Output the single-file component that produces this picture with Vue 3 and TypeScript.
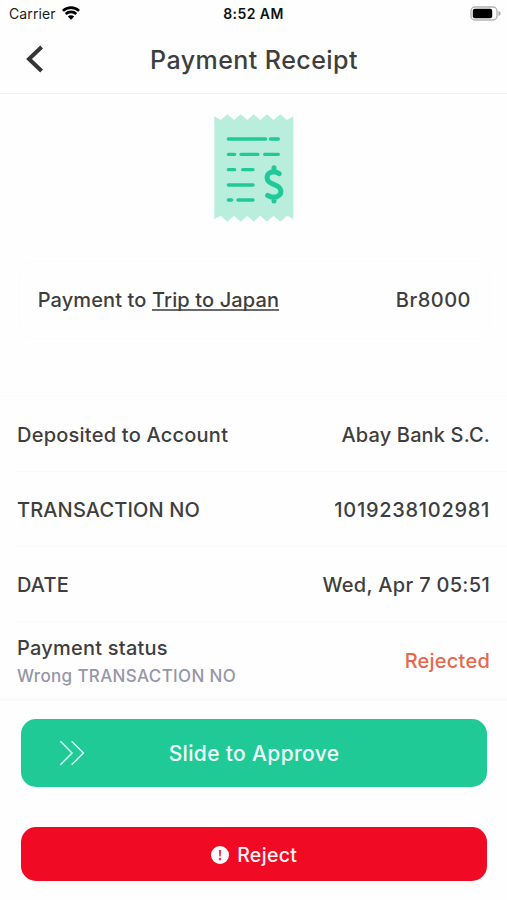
<script setup lang="ts">
interface DetailRow {
  id: string
  label: string
  value: string
}

const rows: DetailRow[] = [
  { id: 'account', label: 'Deposited to Account', value: 'Abay Bank S.C.' },
  { id: 'transaction', label: 'TRANSACTION NO', value: '1019238102981' },
  { id: 'date', label: 'DATE', value: 'Wed, Apr 7 05:51' },
]
</script>

<template>
  <main class="screen">
    <div class="status-bar">
      <div class="carrier">
        <span class="carrier-name">Carrier</span>
        <svg class="wifi" viewBox="0 0 18 14" aria-hidden="true">
          <path d="M.9 4.9a11.7 11.7 0 0 1 16.2 0" />
          <path d="M3.7 8a7.7 7.7 0 0 1 10.6 0" />
          <path class="wifi-dot" d="M9 13.8 5.8 10.5a4.5 4.5 0 0 1 6.4 0Z" />
        </svg>
      </div>
      <span class="clock">8:52 AM</span>
      <svg class="battery" viewBox="0 0 32 15" aria-hidden="true">
        <rect class="battery-case" x="1" y="1" width="26" height="13" rx="4" />
        <rect x="2.8" y="2.8" width="19.4" height="9.4" rx="2" />
        <path class="battery-tip" d="M28.4 5c3 .8 3 4.2 0 5Z" />
      </svg>
    </div>

    <header class="header">
      <button class="back" type="button" aria-label="Back">
        <svg viewBox="0 0 18 28" aria-hidden="true"><path d="M15.6 2 3 14l12.6 12" /></svg>
      </button>
      <h1 class="title">Payment Receipt</h1>
    </header>

    <svg class="receipt" viewBox="43 27 239 324" aria-hidden="true">
      <path
        class="paper"
        d="M44 34 63 45 83 28 103 45 123 28 143 45 162 28 182 45 202 28 222 45 242 28 262 45 281 34V342L262 332 242 350 222 332 202 350 182 332 162 350 143 332 123 350 103 332 83 350 63 332 44 342Z"
      />
      <path
        class="lines"
        d="M86 102H198M212 102H236M86 148H105M124 148H175M195 148H236M86 194H105M129 194H160M86 240H160M86 285H96M115 285H160"
      />
      <path
        class="dollar"
        d="M223 188V201M223 276V288M239 206C230 199 216 198 208 205C199 214 201 227 212 233L231 242C246 250 247 264 238 271C229 279 214 278 204 271"
      />
    </svg>

    <section class="summary">
      <span class="text payment-to">Payment to <a class="trip">Trip to Japan</a></span>
      <span class="text amount">Br8000</span>
    </section>

    <section class="details">
      <div v-for="row in rows" :key="row.id" class="row">
        <span class="text" :class="`label-${row.id}`">{{ row.label }}</span>
        <span class="text" :class="`value-${row.id}`">{{ row.value }}</span>
      </div>
      <div class="row row-status">
        <div class="status-copy">
          <span class="text status-label">Payment status</span>
          <span class="reason">Wrong TRANSACTION NO</span>
        </div>
        <span class="text rejected">Rejected</span>
      </div>
    </section>

    <button class="approve" type="button">
      <svg class="chevrons" viewBox="0 0 26 26" aria-hidden="true">
        <path d="M1.4 1.2 13 13 1.4 24.8M12.6 1.2 24.4 13 12.6 24.8" />
      </svg>
      <span class="approve-text">Slide to Approve</span>
    </button>

    <button class="reject" type="button">
      <svg class="alert" viewBox="0 0 18 18" aria-hidden="true">
        <circle cx="9" cy="9" r="9" />
        <path d="M7.9 4h2.2l-.4 6.4H8.3Z" />
        <circle class="alert-dot" cx="9" cy="13.1" r="1.3" />
      </svg>
      <span class="reject-text">Reject</span>
    </button>
  </main>
</template>

<style>
body {
  background: #fefefe;
}
</style>

<style scoped>
.screen {
  box-sizing: border-box;
  width: 507px;
  height: 900px;
  overflow: hidden;
  display: flex;
  flex-direction: column;
  background: #fefefe;
  color: #3e3e3f;
  font-family: Inter, "Liberation Sans", sans-serif;
}

button {
  border: 0;
  padding: 0;
  margin: 0;
  font-family: inherit;
}

svg {
  display: block;
  flex: none;
}

.status-bar {
  height: 28px;
  flex: none;
  display: grid;
  grid-template-columns: 1fr auto 1fr;
  align-items: center;
  padding: 0 5px 0 9px;
  color: #1c1c1c;
}

.carrier {
  display: flex;
  align-items: center;
  gap: 6px;
}

.carrier-name {
  font-size: 14px;
  letter-spacing: 0.1px;
  line-height: 28px;
}

.wifi {
  width: 18px;
  height: 14px;
  margin-top: -2px;
  fill: none;
  stroke: #000;
  stroke-width: 2.6;
}

.wifi .wifi-dot {
  fill: #000;
  stroke: none;
}

.clock {
  margin-right: 4px;
  font-size: 14px;
  font-weight: 600;
  letter-spacing: 0.45px;
  line-height: 28px;
  color: #111;
}

.battery {
  width: 32px;
  height: 15px;
  justify-self: end;
  margin-top: -2px;
}

.battery-case {
  fill: none;
  stroke: #b4b4b4;
  stroke-width: 1.4;
}

.battery .battery-tip {
  fill: #aaa;
}

.header {
  box-sizing: border-box;
  height: 66px;
  flex: none;
  display: grid;
  grid-template-columns: 60px 1fr 60px;
  align-items: center;
  border-bottom: 1px solid #efefef;
}

.back {
  width: 18px;
  height: 28px;
  margin-left: 26px;
  margin-top: -3px;
  background: none;
}

.back svg {
  width: 18px;
  height: 28px;
  fill: none;
  stroke: #343435;
  stroke-width: 4;
}

.title {
  margin: 0 0 2px 1px;
  text-align: center;
  font-size: 25px;
  font-weight: 450;
  line-height: 32px;
  letter-spacing: 0.45px;
  white-space: nowrap;
}

.receipt {
  width: 79.67px;
  height: 108px;
  margin: 20px 0 0 214.3px;
}

.paper {
  fill: #b9eedd;
}

.lines,
.dollar {
  fill: none;
  stroke: #20c997;
  stroke-width: 10;
  stroke-linecap: round;
}

.dollar {
  stroke-width: 15;
}

.text {
  font-size: 20px;
  font-weight: 450;
  line-height: 26px;
  letter-spacing: 0.14px;
  white-space: nowrap;
}

.payment-to {
  letter-spacing: 0.12px;
}

.amount {
  letter-spacing: 0.5px;
}

.label-account,
.status-label,
.rejected {
  letter-spacing: 0.23px;
}

.value-transaction {
  letter-spacing: 0.7px;
}

.value-date {
  letter-spacing: 0.3px;
}

.summary {
  box-sizing: border-box;
  height: 76px;
  flex: none;
  margin: 40px 18px 0 20px;
  padding: 0 18px 0 17.7px;
  display: flex;
  align-items: center;
  justify-content: space-between;
  border-radius: 14px;
  background: #fefefe;
  box-shadow: 0 0 4px rgba(0, 0, 0, 0.025);
}

.trip {
  text-decoration: underline;
  text-decoration-thickness: 2px;
  text-decoration-color: #6a6a6b;
  text-underline-offset: 2px;
  text-decoration-skip-ink: none;
}

.details {
  margin-top: 57px;
  flex: none;
  border-top: 2px solid #fcfcfc;
  border-bottom: 3px solid #fafafa;
}

.row {
  box-sizing: border-box;
  height: 75px;
  margin-left: 17px;
  padding-right: 17px;
  display: flex;
  align-items: center;
  justify-content: space-between;
  border-bottom: 1px solid #fafafa;
}

.row:first-child {
  padding-top: 1px;
}

.row .text {
  padding-top: 1px;
}

.row-status {
  height: 76px;
  border-bottom: 0;
}

.status-copy {
  display: flex;
  flex-direction: column;
  gap: 3px;
  padding-top: 1px;
}

.reason {
  font-size: 17px;
  font-weight: 450;
  line-height: 24px;
  letter-spacing: 0.35px;
  color: #9696a8;
  white-space: nowrap;
}

.rejected {
  color: #e5684b;
}

.approve {
  height: 67.4px;
  flex: none;
  margin: 18.3px 20px 0 21px;
  border-radius: 15px;
  background: #20ca97;
  color: #effff9;
  display: grid;
  grid-template-columns: 100px 1fr 100px;
  align-items: center;
}

.chevrons {
  width: 26px;
  height: 26px;
  margin-left: 38px;
  fill: none;
  stroke: #d5fff0;
  stroke-width: 1.5;
}

.approve-text {
  padding-top: 2px;
  font-size: 21px;
  font-weight: 500;
  letter-spacing: 0.35px;
  white-space: nowrap;
}

.reject {
  height: 54px;
  flex: none;
  margin: 40.6px 20px 0 21px;
  border-radius: 15px;
  background: #f00a23;
  color: #fff2f3;
  display: flex;
  align-items: center;
  justify-content: center;
  gap: 8.5px;
}

.alert {
  width: 18px;
  height: 18px;
  margin-top: 1px;
  fill: #fff;
}

.alert path,
.alert .alert-dot {
  fill: #e8344b;
}

.reject-text {
  padding-top: 2px;
  font-size: 19.5px;
  font-weight: 450;
  letter-spacing: 0.35px;
}
</style>
